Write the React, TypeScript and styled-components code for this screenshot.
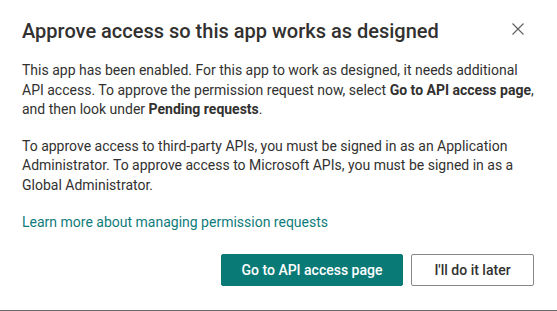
import React from "react";
import styled, { createGlobalStyle } from "styled-components";

const FONT = `"Roboto", "Noto Sans", sans-serif`;

const Global = createGlobalStyle`
  html, body { margin: 0; padding: 0; background: #ffffff; }
  body { font-family: ${FONT}; color: #323130; }
`;

const Dialog = styled.div`
  box-sizing: border-box;
  width: 557px;
  height: 311px;
  background: #ffffff;
  border-bottom: 1px solid #6b6b6b;
  padding: 17px 23px 24px 22px;
  display: flex;
  flex-direction: column;
`;

const Header = styled.div`
  display: flex;
  align-items: flex-start;
  justify-content: space-between;
`;

const Title = styled.h1`
  margin: 0;
  font-size: 20px;
  line-height: 28px;
  font-weight: 500;
  color: #323130;
`;

const CloseButton = styled.button`
  border: none;
  background: transparent;
  padding: 0;
  width: 32px;
  height: 24px;
  display: flex;
  align-items: center;
  justify-content: center;
  cursor: pointer;
`;

const Body = styled.div`
  margin-top: 16px;
  font-size: 14px;
  line-height: 19.5px;
  color: #323130;
`;

const Paragraph = styled.p`
  margin: 0 0 17px 0;
  b { font-weight: 700; }
`;

const Link = styled.a`
  display: block;
  width: fit-content;
  font-size: 14px;
  line-height: 20px;
  color: #0f7c7c;
  text-decoration: none;
`;

const Footer = styled.div`
  margin-top: auto;
  display: flex;
  justify-content: flex-end;
  gap: 8px;
`;

const Button = styled.button<{ $primary?: boolean }>`
  box-sizing: border-box;
  height: 32px;
  width: ${(p) => (p.$primary ? "182px" : "123px")};
  padding: 0;
  white-space: nowrap;
  border-radius: 2px;
  font-family: ${FONT};
  font-size: 14px;
  font-weight: 500;
  cursor: pointer;
  background: ${(p) => (p.$primary ? "#0a7a76" : "#ffffff")};
  color: ${(p) => (p.$primary ? "#ffffff" : "#323130")};
  border: 1px solid ${(p) => (p.$primary ? "#0a7a76" : "#8a8886")};
`;

export default function App() {
  return (
    <>
      <Global />
      <Dialog>
        <Header>
          <Title>Approve access so this app works as designed</Title>
          <CloseButton aria-label="Close">
            <svg width="12" height="12" viewBox="0 0 12 12">
              <path d="M0.5 0.5 L11.5 11.5 M11.5 0.5 L0.5 11.5" stroke="#605e5c" strokeWidth="1.1" fill="none" />
            </svg>
          </CloseButton>
        </Header>
        <Body>
          <Paragraph>
            This app has been enabled. For this app to work as designed, it needs additional
            API access. To approve the permission request now, select <b>Go to API access page</b>,
            and then look under <b>Pending requests</b>.
          </Paragraph>
          <Paragraph>
            To approve access to third-party APIs, you must be signed in as an Application
            Administrator. To approve access to Microsoft APIs, you must be signed in as a
            Global Administrator.
          </Paragraph>
          <Link href="#">Learn more about managing permission requests</Link>
        </Body>
        <Footer>
          <Button $primary>Go to API access page</Button>
          <Button>I'll do it later</Button>
        </Footer>
      </Dialog>
    </>
  );
}
